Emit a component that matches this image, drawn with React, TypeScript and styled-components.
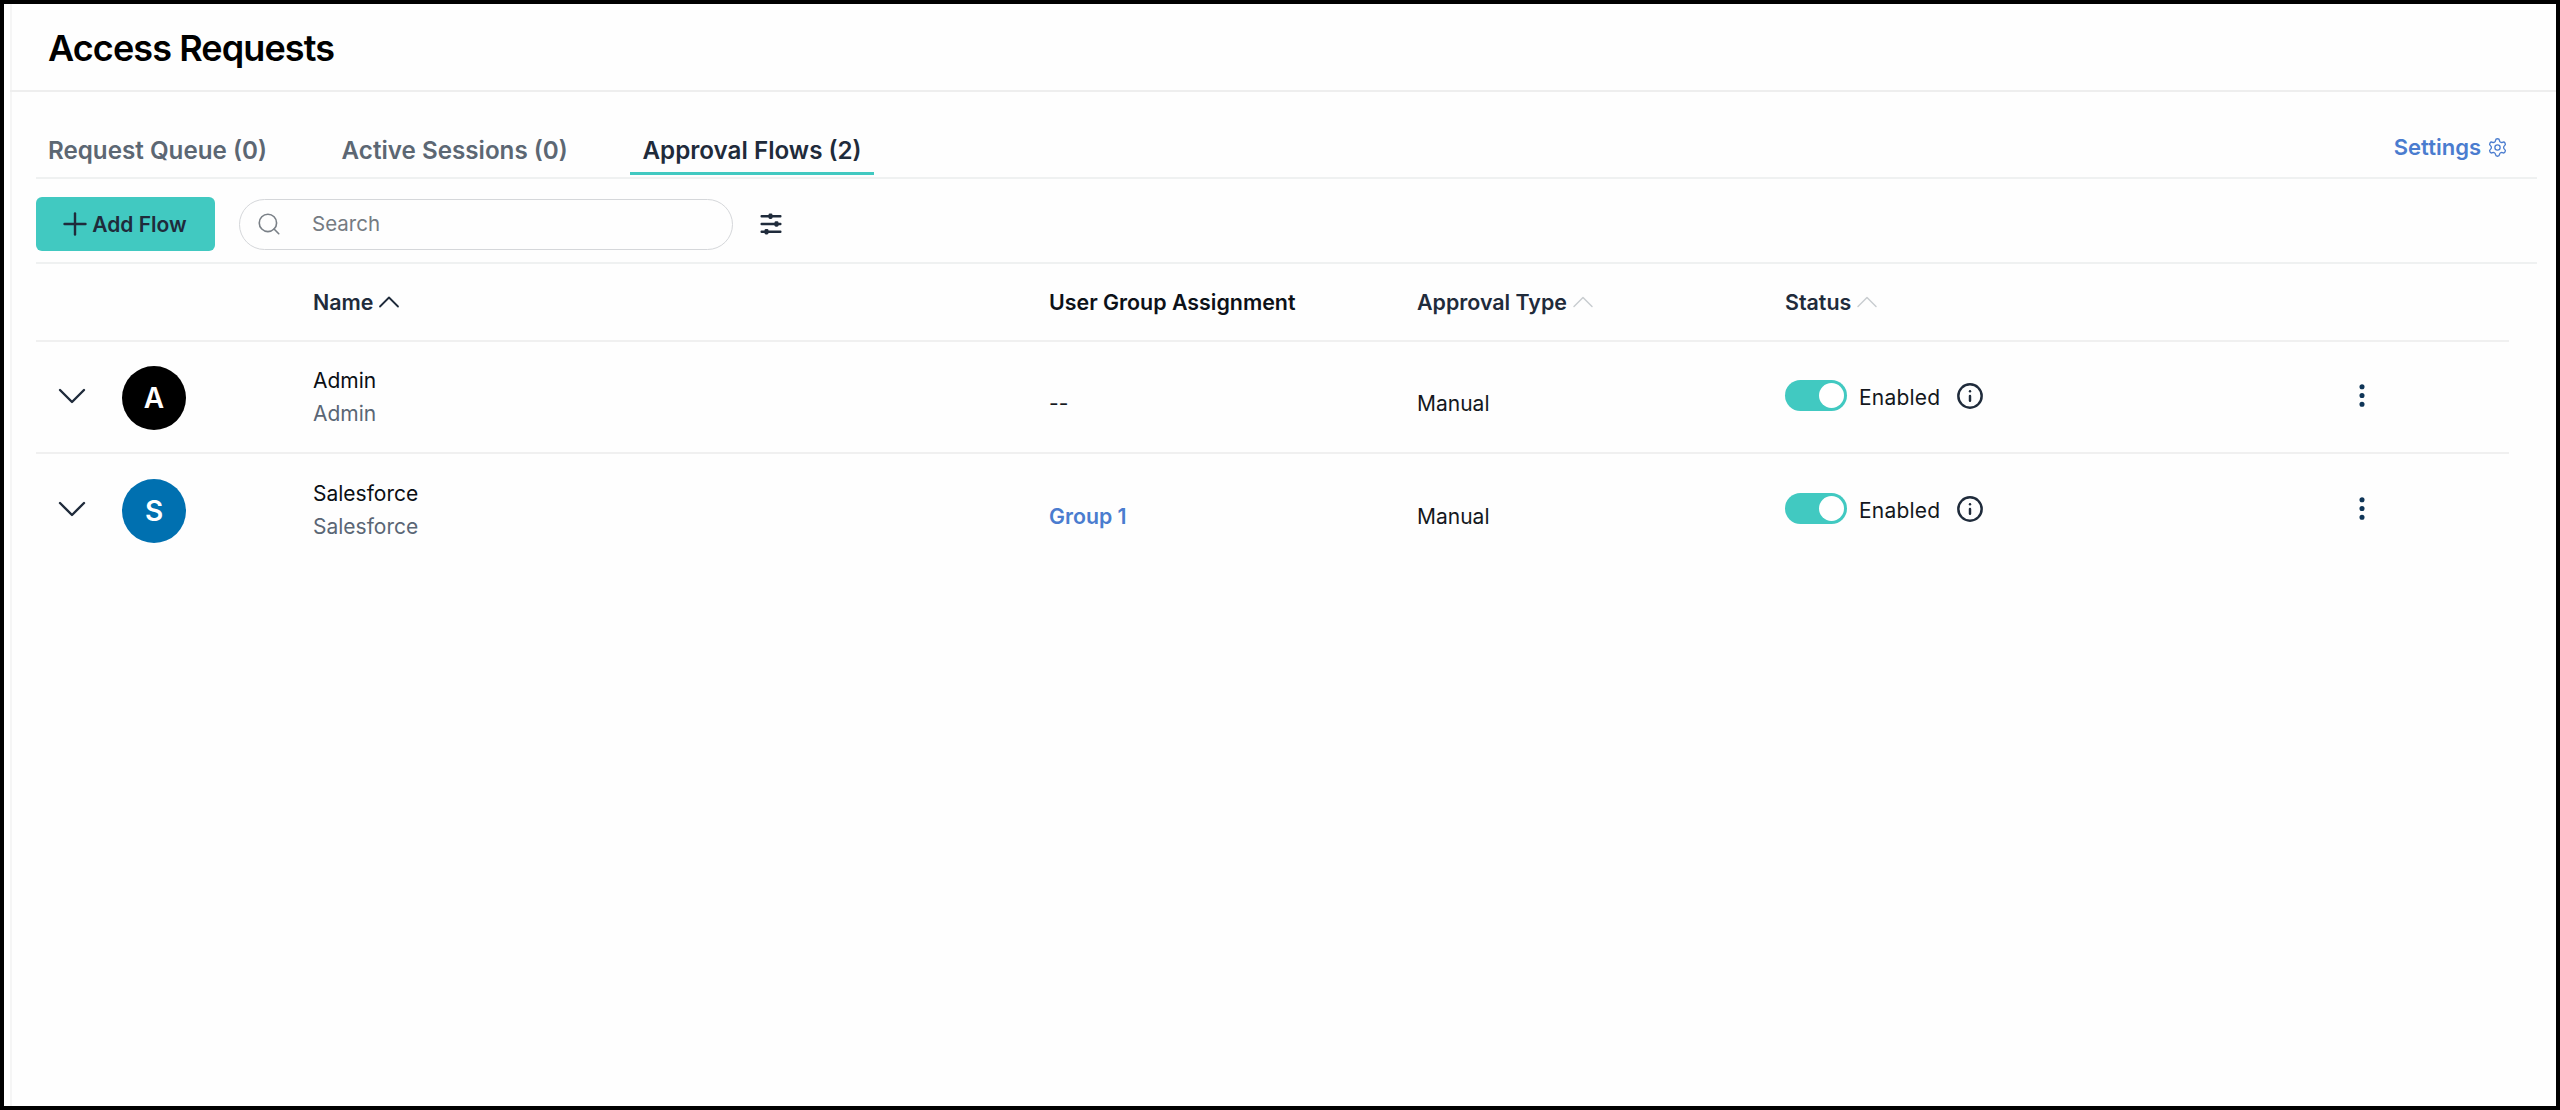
import React from "react";
import styled, { createGlobalStyle } from "styled-components";
import { ChevronDown, ChevronUp, Plus, Search, Settings, Info, MoreVertical } from "lucide-react";

const Global = createGlobalStyle`
  html, body { margin: 0; padding: 0; background: #fff; }
  * { box-sizing: border-box; }
  body { font-family: Inter, "Liberation Sans", sans-serif; }
`;

const Frame = styled.div`
  width: 2560px;
  height: 1110px;
  border: 4px solid #000;
  background: #fefefe;
  overflow: hidden;
  padding-left: 6px;
`;
const Main = styled.main`
  height: 100%;
  border-left: 2px solid #f5f5f5;
`;
const PageHeader = styled.header`
  height: 88px;
  border-bottom: 2px solid #eeeeee;
  margin-left: -2px;
  padding-left: 38px;
  display: flex;
  align-items: center;
`;
const Title = styled.h1`
  margin: 2px 0 0;
  font-size: 36px;
  line-height: 44px;
  font-weight: 600;
  letter-spacing: -0.9px;
  color: #000;
`;
const Content = styled.div`
  padding: 0 19px 0 24px;
`;
const TabBar = styled.div`
  height: 87px;
  border-bottom: 2px solid #eff1f1;
  display: flex;
  align-items: flex-end;
  justify-content: space-between;
`;
const Tabs = styled.div`
  display: flex;
  gap: 50.7px;
`;
const Tab = styled.div<{ $active?: boolean }>`
  height: 41px;
  margin-bottom: 2px;
  padding: 1px 12px 0;
  font-size: 24.2px;
  line-height: 32px;
  font-weight: 600;
  color: ${(p) => (p.$active ? "#1f2b3b" : "#5c6773")};
  border-bottom: 3px solid ${(p) => (p.$active ? "#41c9c1" : "transparent")};
`;
const SettingsLink = styled.a`
  display: flex;
  align-items: center;
  gap: 6px;
  margin: 0 29px 16px 0;
  font-size: 22px;
  line-height: 28px;
  font-weight: 600;
  color: #4a7ccf;
`;
const Toolbar = styled.div`
  height: 85px;
  border-bottom: 2px solid #eff1f1;
  display: flex;
  align-items: center;
  padding-top: 7px;
`;
const AddButton = styled.button`
  width: 179px;
  height: 54px;
  border: 0;
  border-radius: 6px;
  background: #41c9c1;
  color: #1f2b3b;
  font: 600 21px/28px Inter, sans-serif;
  display: flex;
  align-items: center;
  justify-content: center;
  padding: 1px 0 0;
  svg { margin: -1px -1px 0 -7px; }
`;
const SearchBox = styled.div`
  width: 494px;
  height: 51px;
  margin-left: 24px;
  border: 1.5px solid #d5d7da;
  border-radius: 26px;
  display: flex;
  align-items: center;
  padding-left: 16px;
  gap: 30px;
  color: #7a8087;
`;
const SearchText = styled.span`
  font-size: 20.5px;
  line-height: 28px;
  color: #757b82;
`;
const FilterButton = styled.div`
  width: 24px;
  height: 24px;
  margin-left: 26px;
  color: #1f2b3b;
  display: flex;
`;
const Row = styled.div<{ $head?: boolean; $last?: boolean }>`
  width: 2473px;
  height: ${(p) => (p.$head ? 78 : 112)}px;
  display: grid;
  grid-template-columns: 277px 736px 368px 368px 562px 1fr;
  align-items: center;
  border-bottom: ${(p) => (p.$last ? "0" : "2px solid #f0f0f0")};
`;
const HeadCell = styled.div<{ $dark?: boolean }>`
  display: flex;
  align-items: center;
  font-size: 21.4px;
  line-height: 28px;
  font-weight: 600;
  color: ${(p) => (p.$dark ? "#0c1118" : "#1f2b3b")};
  svg { margin: -6px 0 -6px -2px; }
`;
const Identity = styled.div`
  display: flex;
  align-items: center;
  padding: 2px 0 0 12px;
  gap: 26px;
  color: #1f2b3b;
  svg { margin: -16px -12px -12px 0; }
`;
const Avatar = styled.div<{ $color: string }>`
  width: 64px;
  height: 64px;
  margin-left: 12px;
  border-radius: 50%;
  background: ${(p) => p.$color};
  color: #fff;
  font-size: 28px;
  font-weight: 600;
  display: flex;
  align-items: center;
  justify-content: center;
`;
const NameStack = styled.div`
  display: flex;
  flex-direction: column;
  gap: 5px;
`;
const Name = styled.div`
  font-size: 21px;
  line-height: 28px;
  color: #0b0f14;
`;
const SubName = styled.div`
  font-size: 21px;
  line-height: 28px;
  color: #5a6675;
`;
const BodyCell = styled.div`
  padding-top: 13px;
  font-size: 21px;
  line-height: 28px;
  color: #14181d;
`;
const GroupLink = styled.a`
  font-size: 21.3px;
  line-height: 28px;
  font-weight: 600;
  color: #4a7ccf;
`;
const StatusCell = styled.div`
  display: flex;
  align-items: center;
  padding-bottom: 4px;
  color: #14181d;
  font-size: 21px;
  line-height: 28px;
`;
const Toggle = styled.div`
  width: 62px;
  height: 31px;
  border-radius: 16px;
  background: #41c9c1;
  display: flex;
  justify-content: flex-end;
  align-items: center;
  padding-right: 3px;
`;
const Knob = styled.div`
  width: 25px;
  height: 25px;
  border-radius: 50%;
  background: #fff;
`;
const StatusLabel = styled.span`
  margin: 5px 0 0 12px;
  letter-spacing: 0.2px;
`;
const InfoButton = styled.div`
  margin: 2px 0 0 16px;
  width: 28px;
  height: 28px;
  color: #1f2b3b;
  display: flex;
`;
const ActionCell = styled.div`
  display: flex;
  justify-content: center;
  width: 30px;
  padding-bottom: 3px;
  color: #0f3557;
`;

const FilterIcon = () => (
  <svg width="24" height="24" viewBox="0 0 24 24" fill="currentColor">
    <rect x="1.5" y="3.1" width="21" height="2.4" rx="1" />
    <rect x="9.5" y="1.6" width="4" height="5.4" rx="1.4" />
    <rect x="1.5" y="10.8" width="21" height="2.4" rx="1" />
    <rect x="15.5" y="9.3" width="4" height="5.4" rx="1.4" />
    <rect x="1.5" y="18.5" width="21" height="2.4" rx="1" />
    <rect x="5.5" y="17" width="4" height="5.4" rx="1.4" />
  </svg>
);

const flows = [
  { initial: "A", color: "#000", name: "Admin", group: "--", link: false },
  { initial: "S", color: "#0070b0", name: "Salesforce", group: "Group 1", link: true },
];

export default function App() {
  return (
    <>
      <Global />
      <Frame>
        <Main>
          <PageHeader>
            <Title>Access Requests</Title>
          </PageHeader>
          <Content>
            <TabBar>
              <Tabs>
                <Tab>Request Queue (0)</Tab>
                <Tab>Active Sessions (0)</Tab>
                <Tab $active>Approval Flows (2)</Tab>
              </Tabs>
              <SettingsLink>
                Settings <Settings size={21} strokeWidth={1.5} />
              </SettingsLink>
            </TabBar>
            <Toolbar>
              <AddButton>
                <Plus size={36} strokeWidth={1.6} />
                Add Flow
              </AddButton>
              <SearchBox>
                <Search size={26} strokeWidth={1.5} />
                <SearchText>Search</SearchText>
              </SearchBox>
              <FilterButton>
                <FilterIcon />
              </FilterButton>
            </Toolbar>
            <Row $head>
              <span />
              <HeadCell>
                Name <ChevronUp size={36} strokeWidth={1.2} color="#1f2b3b" />
              </HeadCell>
              <HeadCell $dark>User Group Assignment</HeadCell>
              <HeadCell>
                Approval Type <ChevronUp size={36} strokeWidth={1} color="#c9cdd0" />
              </HeadCell>
              <HeadCell>
                Status <ChevronUp size={36} strokeWidth={1} color="#c9cdd0" />
              </HeadCell>
              <span />
            </Row>
            {flows.map((f, i) => (
              <Row key={f.name} $last={i === flows.length - 1}>
                <Identity>
                  <ChevronDown size={48} strokeWidth={1.2} />
                  <Avatar $color={f.color}>{f.initial}</Avatar>
                </Identity>
                <NameStack>
                  <Name>{f.name}</Name>
                  <SubName>{f.name}</SubName>
                </NameStack>
                <BodyCell>{f.link ? <GroupLink>{f.group}</GroupLink> : f.group}</BodyCell>
                <BodyCell>Manual</BodyCell>
                <StatusCell>
                  <Toggle>
                    <Knob />
                  </Toggle>
                  <StatusLabel>Enabled</StatusLabel>
                  <InfoButton>
                    <Info size={28} strokeWidth={2.1} />
                  </InfoButton>
                </StatusCell>
                <ActionCell>
                  <MoreVertical size={33} strokeWidth={2.1} />
                </ActionCell>
              </Row>
            ))}
          </Content>
        </Main>
      </Frame>
    </>
  );
}
